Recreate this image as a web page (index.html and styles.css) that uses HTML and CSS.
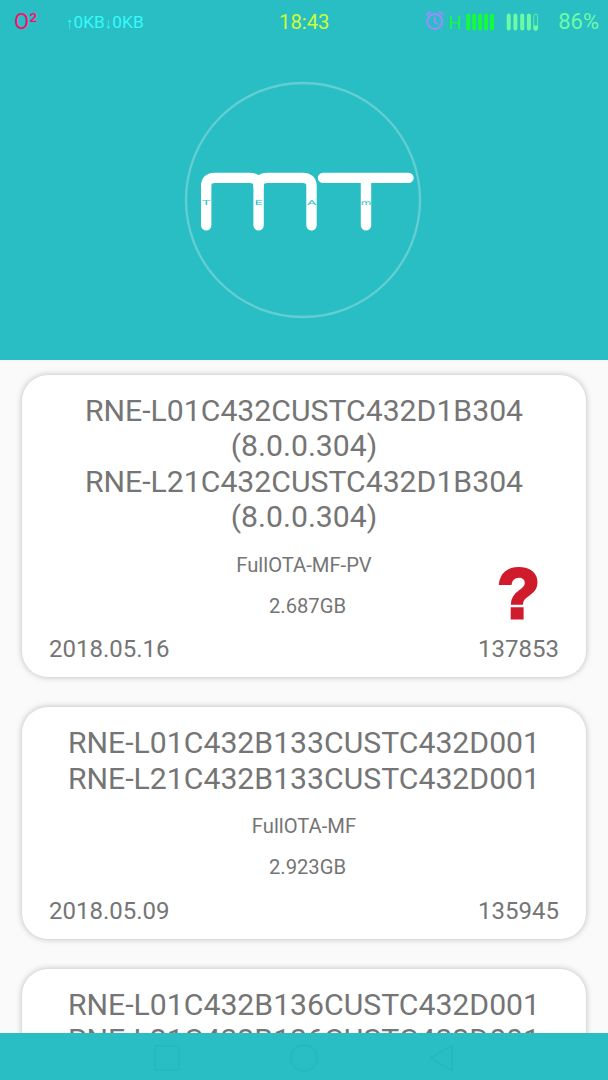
FILE: index.html
```html
<!DOCTYPE html>
<html lang="en">
<head>
  <meta charset="UTF-8">
  <meta name="viewport" content="width=device-width, initial-scale=1.0">
  <title>Firmware List</title>
  <link rel="stylesheet" href="styles.css">
</head>
<body>

  <!-- Header Section -->
  <header>
    <div class="status-bar">
      <span class="carrier">O²</span>
      <span class="net-speed"><span class="arrow">↑</span>0KB<span class="arrow">↓</span>0KB</span>
      <span class="clock">18:43</span>
      <svg class="status-icons" width="116" height="26" viewBox="0 0 116 26">
        <!-- Alarm -->
        <g fill="none" stroke="#9c8cff" stroke-width="2">
          <circle cx="10.800" cy="12.500" r="7.500"/>
          <path d="M10.800 8V13L14.300 15.500M2.300 6L6.800 2.300M19.300 6L14.800 2.300"/>
        </g>
        <!-- Signal -->
        <text class="network-type" x="24.500" y="20">H</text>
        <g stroke="#14fb3c" stroke-width="4" stroke-linecap="round">
          <path d="M44.300 6.500V19.500M50.200 6.500V19.500M56.100 6.500V19.500M62 6.500V19.500M68 6.500V19.500"/>
        </g>
        <!-- Battery -->
        <g stroke="#6cfba4" stroke-width="4" stroke-linecap="round">
          <path d="M84.700 6.500V19.500M91.400 6.500V19.500M98.200 6.500V19.500M104.900 6.500V19.500"/>
        </g>
        <rect x="109.800" y="5" width="3.800" height="16" rx="1.900" fill="none" stroke="#6cfba4" stroke-width="0.8"/>
        <path d="M109.400 16.500h4.600v3a2 2 0 0 1-4.600 0z" fill="#6cfba4"/>
      </svg>
      <span class="battery">86%</span>
    </div>

    <svg class="logo" width="238" height="238" viewBox="0 0 238 238">
      <circle cx="119" cy="119" r="117" fill="none" stroke="#62ced3" stroke-width="2.4"/>
      <g fill="none" stroke="#fff" stroke-width="10.4" stroke-linecap="round">
        <path d="M22.200 144.300V105Q22.200 96.900 31 96.900H65.500Q74.600 96.900 74.600 105V144.300"/>
        <path d="M74.600 105Q74.600 96.900 83.600 96.900H118.500Q127.500 96.900 127.500 105V144.300"/>
        <path d="M139 96.900H224.500M182 96.900V144.300"/>
      </g>
      <g class="logo-text">
        <text x="18.200" y="124" textLength="8" lengthAdjust="spacingAndGlyphs">T</text>
        <text x="70.500" y="124" textLength="8.500" lengthAdjust="spacingAndGlyphs">E</text>
        <text x="123.200" y="124" textLength="9" lengthAdjust="spacingAndGlyphs">A</text>
        <text x="176.700" y="124" textLength="10.600" lengthAdjust="spacingAndGlyphs">m</text>
      </g>
    </svg>
  </header>

  <!-- Firmware Cards -->
  <main class="card-list">
    <div class="card">
      <h2 class="card-title">RNE-L01C432CUSTC432D1B304<br>(8.0.0.304)<br>RNE-L21C432CUSTC432D1B304<br>(8.0.0.304)</h2>
      <p class="card-type">FullOTA-MF-PV</p>
      <p class="card-size">2.687GB</p>
      <div class="card-footer">
        <span>2018.05.16</span>
        <span>137853</span>
      </div>
      <span class="unknown-badge">?</span>
    </div>

    <div class="card">
      <h2 class="card-title">RNE-L01C432B133CUSTC432D001<br>RNE-L21C432B133CUSTC432D001</h2>
      <p class="card-type">FullOTA-MF</p>
      <p class="card-size">2.923GB</p>
      <div class="card-footer">
        <span>2018.05.09</span>
        <span>135945</span>
      </div>
    </div>

    <div class="card">
      <h2 class="card-title">RNE-L01C432B136CUSTC432D001<br>RNE-L21C432B136CUSTC432D001</h2>
    </div>
  </main>

  <!-- Navigation Bar -->
  <nav class="nav-bar">
    <svg width="26" height="28" viewBox="0 0 26 28"><rect x="1" y="2" width="24" height="24" rx="1.500"/></svg>
    <svg width="28" height="28" viewBox="0 0 28 28"><circle cx="14" cy="14" r="13"/></svg>
    <svg width="26" height="28" viewBox="0 0 26 28"><path d="M2 14L24 1.500V26.500Z"/></svg>
  </nav>

</body>
</html>
```

FILE: styles.css
```css
/* General body styles */
body {
  font-family: Roboto, sans-serif;
  margin: 0;
  height: 1080px;
  display: flex;
  flex-direction: column;
  background: #fafafa;
  color: #757575;
  overflow: hidden;
}

/* Header styles */
header {
  flex: none;
  height: 360px;
  background: #28bec4;
  display: flex;
  flex-direction: column;
  align-items: center;
}

.status-bar {
  align-self: stretch;
  height: 43px;
  box-sizing: border-box;
  padding: 0 9px 0 14px;
  display: flex;
  align-items: center;
  white-space: nowrap;
}

.carrier {
  width: 52px;
  font-size: 22px;
  color: #fb0d6c;
}

.net-speed {
  width: 213px;
  font-size: 17.3px;
  color: #36fafa;
}

.arrow {
  font-family: "Liberation Sans", sans-serif;
  font-size: 15px;
  line-height: 1;
}

.clock {
  width: 145px;
  font-size: 20.3px;
  color: #ccff33;
}

.network-type {
  font-size: 18px;
  fill: #14fb3c;
}

.battery {
  margin-left: auto;
  font-size: 22px;
  color: #6cfba4;
}

/* Logo */
.logo {
  margin-top: 38px;
  margin-right: 2px;
}

.logo-text {
  font-family: "DejaVu Sans", sans-serif;
  font-size: 6.5px;
  fill: #28bec4;
}

/* Firmware cards */
.card-list {
  flex: 1;
  min-height: 0;
  padding: 15px 22px 0;
  display: flex;
  flex-direction: column;
  gap: 30px;
  overflow: hidden;
}

.card {
  flex: none;
  position: relative;
  box-sizing: border-box;
  padding: 18px 27px 14px;
  border-radius: 26px;
  background: #fff;
  box-shadow: 0 0 6px rgba(0, 0, 0, 0.26);
  text-align: center;
}

.card-title {
  margin: 0;
  font-size: 30.2px;
  font-weight: 400;
  line-height: 35.4px;
}

.card-type {
  margin: 19px 0 0;
  font-size: 20.2px;
  line-height: 23.4px;
}

.card-size {
  margin: 17.6px 0 0;
  padding-left: 7px;
  font-size: 20.2px;
  line-height: 23.4px;
}

.card-footer {
  display: flex;
  justify-content: space-between;
  margin-top: 17.4px;
  font-size: 24px;
  line-height: 28px;
}

.unknown-badge {
  position: absolute;
  right: 46px;
  bottom: 50px;
  font-family: "Liberation Sans", sans-serif;
  font-size: 70px;
  font-weight: 700;
  line-height: 66px;
  color: #cf1b2b;
  -webkit-text-stroke: 3px #cf1b2b;
}

/* Bottom navigation */
.nav-bar {
  flex: none;
  height: 47px;
  background: #28bec4;
  display: flex;
  justify-content: center;
  align-items: center;
  gap: 110px;
  padding: 2px 1px 0 0;
  box-sizing: border-box;
}

.nav-bar svg {
  fill: none;
  stroke: #25b9bb;
  stroke-width: 1.8;
  stroke-linejoin: round;
}
```
